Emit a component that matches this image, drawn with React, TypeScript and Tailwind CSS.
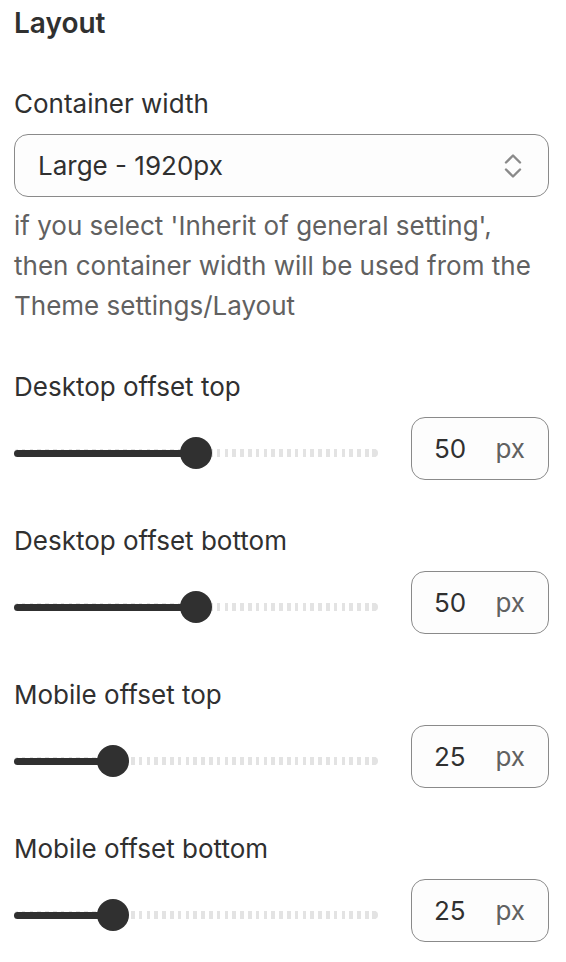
import React from "react";

interface SliderFieldProps {
  label: string;
  value: number;
}

function SliderField({ label, value }: SliderFieldProps) {
  const thumbCenter = 16 + (value / 100) * 332;
  return (
    <div className="flex flex-col">
      <label className="text-[26px] leading-[40px] text-[#303030]">{label}</label>
      <div className="mt-[10px] flex items-center gap-[33px]">
        <div className="relative mt-[9px] h-[32px] w-[364px] shrink-0">
          <div className="absolute right-0 top-[12px] h-[8px] w-full rounded-full bg-[repeating-linear-gradient(90deg,#e3e3e3_0_3.5px,transparent_3.5px_7.8px)]" />
          <div className="absolute right-0 top-[12px] h-[8px] w-[6px] rounded-r-full bg-[#e3e3e3]" />
          <div
            className="absolute left-0 top-[12.5px] h-[7px] rounded-full bg-[#303030]"
            style={{ width: thumbCenter }}
          />
          <div
            className="absolute top-0 h-[32px] w-[32px] -translate-x-1/2 rounded-full bg-[#303030]"
            style={{ left: thumbCenter }}
          />
        </div>
        <div className="flex h-[63px] flex-1 items-center justify-between rounded-[14px] border border-[#8a8a8a] bg-[#fdfdfd] pl-[22px] pr-[23px] text-[26px]">
          <span className="text-[#303030]">{value}</span>
          <span className="text-[#616161]">px</span>
        </div>
      </div>
    </div>
  );
}

export default function App() {
  return (
    <div
      className="min-h-screen bg-white pl-[14px] pr-[17px] pt-[3px] text-[#303030]"
      style={{ fontFamily: "Inter, 'Noto Sans', sans-serif" }}
    >
      <div className="flex flex-col gap-[41px]">
        <h2 className="text-[28px] font-semibold leading-[40px]">Layout</h2>

        <div className="flex flex-col">
          <label className="text-[26px] leading-[40px]">Container width</label>
          <div className="mt-[10px] flex h-[63px] items-center justify-between rounded-[14px] border border-[#8a8a8a] bg-[#fdfdfd] pl-[23px] pr-[26px]">
            <span className="text-[26px]">Large - 1920px</span>
            <svg width="18" height="24" viewBox="0 0 18 24" fill="none" stroke="#8a8a8a" strokeWidth="2.4" strokeLinecap="round" strokeLinejoin="round">
              <path d="M2 8.5 9 1.5l7 7" />
              <path d="M2 15.5l7 7 7-7" />
            </svg>
          </div>
          <p className="mt-[9px] text-[26px] leading-[40px] text-[#616161]">
            if you select 'Inherit of general setting', then container width will be used from the Theme settings/Layout
          </p>
        </div>

        <SliderField label="Desktop offset top" value={50} />
        <SliderField label="Desktop offset bottom" value={50} />
        <SliderField label="Mobile offset top" value={25} />
        <SliderField label="Mobile offset bottom" value={25} />
      </div>
    </div>
  );
}
